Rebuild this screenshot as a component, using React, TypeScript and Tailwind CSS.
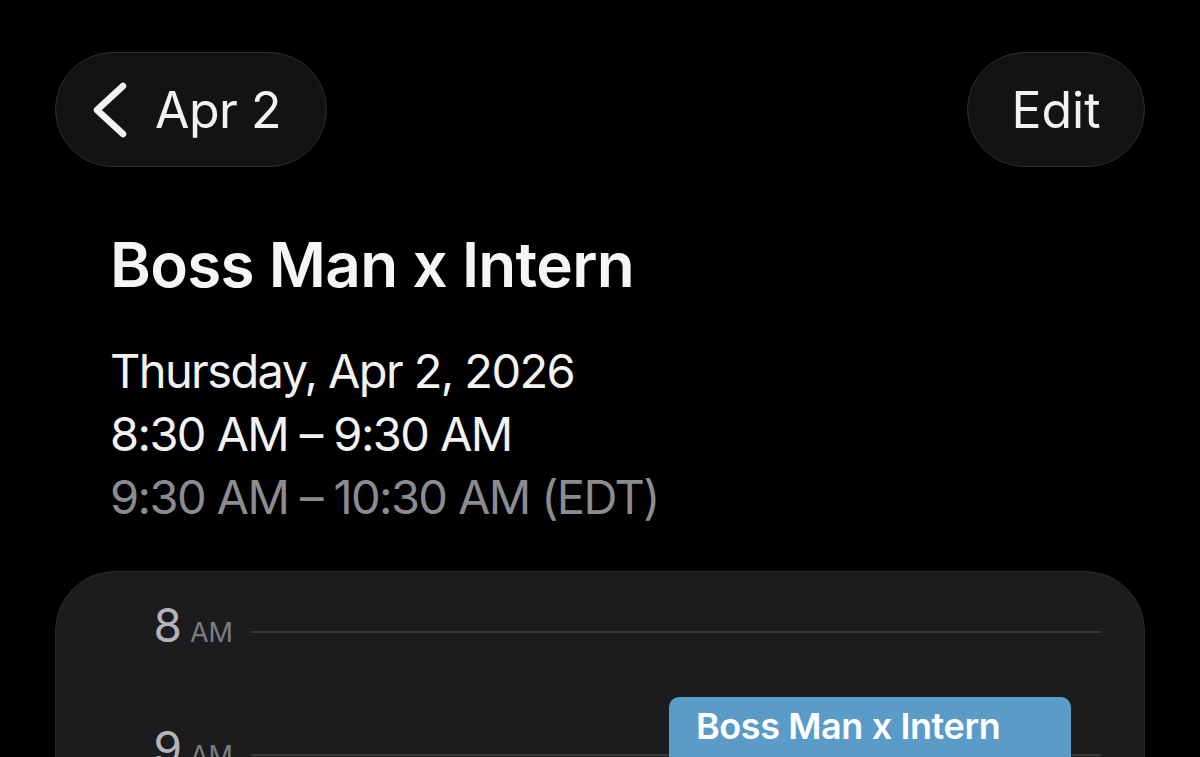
import React from "react";

const font = { fontFamily: 'Inter, "Noto Sans", sans-serif' };

function HourRow({ hour }: { hour: string }) {
  return (
    <div className="flex items-start h-[123px]">
      <div className="w-[177px] flex items-baseline justify-end leading-none">
        <span className="text-[46px] text-[#b4b4b8] leading-[46px]">{hour}</span>
        <span className="ml-[8px] text-[27px] text-[#7c7c80]">AM</span>
      </div>
      <div className="flex-1 ml-[18px] mt-[29px] h-[2px] bg-[#3a3a3c]" />
    </div>
  );
}

export default function App() {
  return (
    <div className="w-[1200px] h-[757px] bg-black overflow-hidden text-white" style={font}>
      <div className="flex justify-between px-[55px] pt-[52px]">
        <div className="w-[272px] h-[115px] rounded-full bg-[#131313] border border-[#2c2c2c] flex items-center pl-[35px]">
          <svg width="37" height="56" viewBox="0 0 37 56" fill="none">
            <path d="M32 4 L6 28 L32 52" stroke="#f2f2f2" strokeWidth="6.5" strokeLinecap="round" strokeLinejoin="round" />
          </svg>
          <span className="ml-[27px] text-[50px] leading-none text-[#f2f2f2] tracking-[-0.5px]">Apr 2</span>
        </div>
        <div className="w-[178px] h-[115px] rounded-full bg-[#131313] border border-[#2c2c2c] flex items-center justify-center">
          <span className="text-[50px] leading-none text-[#f2f2f2]">Edit</span>
        </div>
      </div>

      <div className="pl-[110px] mt-[67px]">
        <h1 className="text-[62px] leading-[62px] font-semibold text-[#f5f5f5] tracking-[-0.7px]">Boss Man x Intern</h1>
        <div className="mt-[43px] text-[47px] leading-[63px] tracking-[-1.6px]">
          <div className="text-[#f2f2f2]">Thursday, Apr 2, 2026</div>
          <div className="text-[#f2f2f2]">8:30 AM – 9:30 AM</div>
          <div className="text-[#8c8c90]">9:30 AM – 10:30 AM (EDT)</div>
        </div>
      </div>

      <div className="mx-[55px] mt-[43px] h-[400px] rounded-[60px] bg-[#1c1c1e] border border-[#2a2a2c] relative pt-[30px] pr-[43px]">
        <HourRow hour="8" />
        <HourRow hour="9" />
        <div className="absolute left-[613px] top-[125px] w-[402px] h-[200px] rounded-[10px] bg-[#5b9bc8] pl-[27px] pt-[11px]">
          <span className="text-[36px] leading-[36px] font-semibold text-white tracking-[-0.4px]">Boss Man x Intern</span>
        </div>
      </div>
    </div>
  );
}
